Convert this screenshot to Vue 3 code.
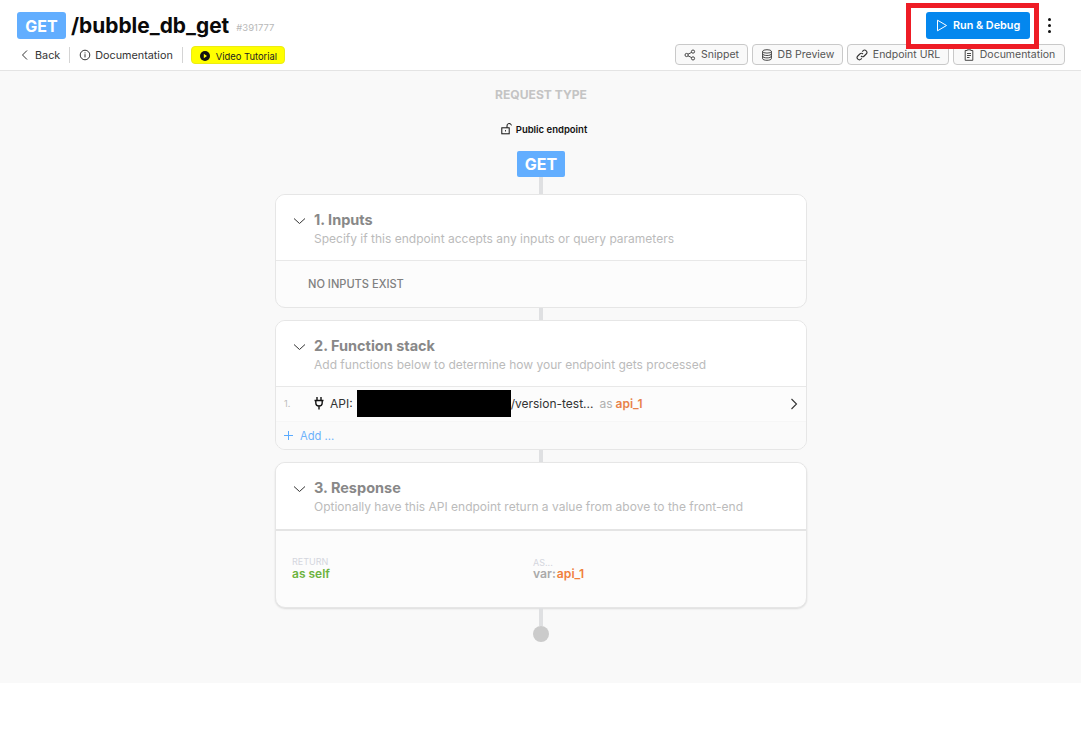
<template>
  <div class="page">
    <header class="top">
      <div class="top-left">
        <div class="title-row">
          <span class="verb verb-lg">GET</span>
          <h1 class="title">/bubble_db_get</h1>
          <span class="hash">#391777</span>
        </div>
        <div class="nav-row">
          <a class="nav-link back">
            <svg width="12" height="12" viewBox="0 0 12 12" fill="none" stroke="#333" stroke-width="1"><path d="M8 1.500 3.500 6 8 10.500" /></svg>
            Back
          </a>
          <span class="sep"></span>
          <a class="nav-link">
            <svg width="12" height="12" viewBox="0 0 12 12" fill="none" stroke="#333" stroke-width="1"><circle cx="6" cy="6" r="4.800" /><path d="M6 5.200v3.200M6 3.400v1" /></svg>
            Documentation
          </a>
          <span class="sep"></span>
          <a class="video">
            <svg width="10" height="10" viewBox="0 0 10 10"><circle cx="5" cy="5" r="5" fill="#111" /><path d="M3.800 2.800 7 5 3.800 7.200z" fill="#ff0" /></svg>
            Video Tutorial
          </a>
        </div>
      </div>
      <div class="top-right">
        <div class="action-row">
          <button class="run">
            <svg width="12" height="13" viewBox="0 0 12 13" fill="none" stroke="#fff" stroke-width="1"><path d="M1.500 1.200 10.500 6.500 1.500 11.800z" stroke-linejoin="round" /></svg>
            Run &amp; Debug
          </button>
          <span class="kebab"><i></i><i></i><i></i></span>
        </div>
        <div class="tool-row">
          <button class="tool t-snippet">
            <svg width="12" height="12" viewBox="0 0 12 12" fill="none" stroke="#333" stroke-width=".9"><circle cx="2.600" cy="6" r="1.600" /><circle cx="9" cy="2.600" r="1.600" /><circle cx="9" cy="9.400" r="1.600" /><path d="M4 5.200 7.600 3.400M4 6.800l3.600 1.800" /></svg>
            Snippet
          </button>
          <button class="tool t-db">
            <svg width="12" height="12" viewBox="0 0 12 12" fill="none" stroke="#333" stroke-width=".9"><ellipse cx="6" cy="2.400" rx="4.400" ry="1.700" /><path d="M1.600 2.400v7.200c0 1 2 1.700 4.400 1.700s4.400-.7 4.400-1.700V2.400M1.600 4.800c0 1 2 1.700 4.400 1.700s4.400-.7 4.400-1.700M1.600 7.200c0 1 2 1.700 4.400 1.700s4.400-.7 4.400-1.700" /></svg>
            DB Preview
          </button>
          <button class="tool t-url">
            <svg width="12" height="12" viewBox="0 0 12 12" fill="none" stroke="#333" stroke-width="1.100"><path d="M5 7a2.200 2.200 0 0 0 3.200 0l2-2a2.250 2.250 0 0 0-3.200-3.200l-.8.8" /><path d="M7 5a2.200 2.200 0 0 0-3.200 0l-2 2A2.250 2.250 0 0 0 5 10.200l.8-.8" /></svg>
            Endpoint URL
          </button>
          <button class="tool t-doc">
            <svg width="12" height="12" viewBox="0 0 12 12" fill="none" stroke="#333" stroke-width=".9"><path d="M2.200 1.500h2v-.7h3.600v.7h2v9.800H2.200z" /><path d="M4 4.500h4M4 6.500h4M4 8.500h2.500" /></svg>
            Documentation
          </button>
        </div>
      </div>
    </header>

    <main class="canvas">
      <div class="request-type">REQUEST TYPE</div>
      <div class="public">
        <svg width="12" height="12" viewBox="0 0 12 12" fill="none" stroke="#111" stroke-width="1"><rect x=".8" y="4.800" width="7.400" height="6" /><path d="M6 4.800V3a2 2 0 0 1 4.400-.6" /><path d="M4.500 7.200v1.200" /></svg>
        Public endpoint
      </div>
      <span class="verb verb-md">GET</span>
      <span class="line line-a"></span>

      <section class="card">
        <div class="card-head">
          <svg class="chev" width="13" height="8" viewBox="0 0 13 8" fill="none" stroke="#333" stroke-width="1"><path d="M1 1.500 6.500 6.500 12 1.500" /></svg>
          <div>
            <h2 class="card-title">1. Inputs</h2>
            <p class="card-sub">Specify if this endpoint accepts any inputs or query parameters</p>
          </div>
        </div>
        <div class="empty">NO INPUTS EXIST</div>
      </section>
      <span class="line line-b"></span>

      <section class="card">
        <div class="card-head">
          <svg class="chev" width="13" height="8" viewBox="0 0 13 8" fill="none" stroke="#333" stroke-width="1"><path d="M1 1.500 6.500 6.500 12 1.500" /></svg>
          <div>
            <h2 class="card-title">2. Function stack</h2>
            <p class="card-sub">Add functions below to determine how your endpoint gets processed</p>
          </div>
        </div>
        <div class="fn-row">
          <span class="fn-num">1.</span>
          <svg class="plug" width="12" height="14" viewBox="0 0 12 14" fill="none" stroke="#111" stroke-width="1.400"><path d="M4 1v3.500M8 1v3.500M1.500 4.500h9M2.800 4.500v2.300a3.200 3.200 0 0 0 6.400 0V4.500M6 10v3.500" /></svg>
          <span class="fn-text">API:</span>
          <span class="redact"></span>
          <span class="fn-text">/version-test...</span>
          <span class="fn-as">as</span>
          <span class="fn-var">api_1</span>
          <svg class="fn-go" width="8" height="12" viewBox="0 0 8 12" fill="none" stroke="#333" stroke-width="1.100"><path d="M1.500 1 6.500 6 1.500 11" /></svg>
        </div>
        <div class="add-row">
          <svg width="11" height="11" viewBox="0 0 11 11" stroke="#5aabff" stroke-width="1"><path d="M5.500 1v9M1 5.500h9" /></svg>
          <span>Add ...</span>
        </div>
      </section>
      <span class="line line-b"></span>

      <section class="card card-last">
        <div class="card-head head-last">
          <svg class="chev" width="13" height="8" viewBox="0 0 13 8" fill="none" stroke="#333" stroke-width="1"><path d="M1 1.500 6.500 6.500 12 1.500" /></svg>
          <div>
            <h2 class="card-title">3. Response</h2>
            <p class="card-sub">Optionally have this API endpoint return a value from above to the front-end</p>
          </div>
        </div>
        <div class="resp">
          <div class="resp-col">
            <div class="resp-label">RETURN</div>
            <div class="resp-green">as self</div>
          </div>
          <div class="resp-col resp-col-b">
            <div class="resp-label">AS...</div>
            <div class="resp-val"><span class="resp-grey">var:</span><span class="resp-orange">api_1</span></div>
          </div>
        </div>
      </section>
      <span class="line line-c"></span>
      <span class="end-dot"></span>
    </main>

    <div class="highlight"></div>
  </div>
</template>

<script setup>
</script>

<style>
html, body { margin: 0; background: #fff; }
</style>

<style scoped>
.page {
  position: relative;
  width: 1081px;
  height: 750px;
  overflow: hidden;
  background: #fff;
  font-family: Inter, "Liberation Sans", sans-serif;
  color: #111;
}
.top {
  display: flex;
  justify-content: space-between;
  box-sizing: border-box;
  border-bottom: 1px solid #e4e4e4;
  height: 71px;
  padding: 12px 16px 0 17px;
}
.title-row { display: flex; align-items: center; height: 27px; }
.verb {
  display: flex;
  align-items: center;
  justify-content: center;
  background: #62aeff;
  color: #fff;
  font-weight: 700;
  box-sizing: border-box;
}
.verb-lg { width: 49px; height: 27px; border-radius: 3px; font-size: 16px; }
.verb-md { width: 48px; height: 26px; border-radius: 2px; font-size: 16px; flex: none; }
.title { margin: 0 0 0 5px; font-size: 20.9px; line-height: 27px; font-weight: 700; color: #0a0a0a; }
.hash { margin: 3px 0 0 7px; font-size: 9.5px; color: #b9b9b9; }
.nav-row { display: flex; align-items: center; margin-top: 6px; height: 19px; }
.nav-link { display: flex; align-items: center; gap: 4px; padding-top: 1px; font-size: 10.8px; color: #333; }
.back { margin-left: 2px; }
.sep { width: 1px; height: 16px; background: #d4d4d4; margin: 0 9px 0 9px; }
.sep + .video { margin-left: -1px; }
.video {
  display: flex;
  align-items: center;
  gap: 6px;
  box-sizing: border-box;
  width: 94px;
  height: 18px;
  padding: 3px 0 0 8px;
  background: #ff0;
  border: 1px solid #ecec14;
  border-radius: 4px;
  font-size: 9.4px;
  color: #222;
}
.top-right { display: flex; flex-direction: column; align-items: flex-end; }
.action-row { display: flex; align-items: center; height: 27px; padding-right: 14px; }
.run {
  display: flex;
  align-items: center;
  gap: 5px;
  width: 104px;
  height: 27px;
  padding: 0 0 0 10px;
  border: 0;
  border-radius: 3px;
  background: #0487ee;
  color: #fff;
  font: 600 10.8px Inter, "Liberation Sans", sans-serif;
}
.kebab { display: flex; flex-direction: column; gap: 3px; margin-left: 18px; width: 3px; }
.kebab i { display: block; width: 3px; height: 3px; border-radius: 50%; background: #111; }
.tool-row { display: flex; gap: 4px; margin-top: 5px; }
.tool {
  display: flex;
  align-items: center;
  justify-content: center;
  gap: 5px;
  height: 21px;
  padding: 0;
  box-sizing: border-box;
  background: #f9f9f9;
  border: 1px solid #c9c9c9;
  border-radius: 4px;
  font: 400 10.5px Inter, "Liberation Sans", sans-serif;
  color: #555;
}
.t-snippet { width: 73px; }
.t-db { width: 91px; }
.t-url { width: 102px; }
.t-doc { width: 112px; }
.canvas {
  display: flex;
  flex-direction: column;
  align-items: center;
  height: 612px;
  box-sizing: border-box;
  padding: 17px 0 0 1px;
  background: #f9f9f9;
}
.request-type { font-size: 12.1px; line-height: 14px; font-weight: 700; color: #c4c4c4; }
.public {
  display: flex;
  align-items: center;
  gap: 3px;
  margin: 20px 0 0 6px;
  height: 14px;
  font-size: 9.5px;
  font-weight: 600;
  color: #111;
}
.public + .verb { margin-top: 15px; }
.line { display: block; width: 4px; background: #dfe0e2; flex: none; }
.line-a { height: 17px; }
.line-b { height: 12px; }
.line-c { height: 18px; }
.card {
  width: 532px;
  box-sizing: border-box;
  background: #fcfcfc;
  border: 1px solid #e6e6e6;
  border-radius: 10px;
  overflow: hidden;
  flex: none;
}
.card-last { box-shadow: 0 1px 2px rgba(0, 0, 0, 0.12); }
.card-head {
  display: flex;
  box-sizing: border-box;
  height: 66px;
  padding: 16px 0 0 17px;
  background: #fff;
  border-bottom: 1px solid #e8e8e8;
}
.head-last { height: 68px; border-bottom: 2px solid #e4e4e4; }
.chev { margin: 6px 8px 0 0; flex: none; }
.card-title { margin: 0; font-size: 14.5px; line-height: 18px; font-weight: 700; color: #888; }
.card-sub { margin: 2px 0 0; font-size: 12px; line-height: 16px; color: #bbb; }
.empty { height: 46px; padding: 16px 0 0 32px; box-sizing: border-box; font-size: 11.1px; font-weight: 500; line-height: 15px; color: #808080; }
.fn-row {
  position: relative;
  display: flex;
  align-items: center;
  height: 35px;
  padding: 0 0 2px 8px;
  background: #fcfcfc;
  border-bottom: 1px solid #f6f6f6;
  box-sizing: border-box;
  font-size: 12px;
}
.fn-num { width: 29px; font-size: 9px; color: #bbb; flex: none; }
.plug { margin-right: 5px; flex: none; }
.fn-text { color: #333; }
.redact { width: 154px; height: 27px; margin: 0 0 0 4px; background: #000; flex: none; }
.fn-as { margin-left: 6px; color: #b0b0b0; }
.fn-var { margin-left: 3px; font-weight: 600; color: #e8824a; }
.fn-go { position: absolute; right: 8px; top: 11px; }
.add-row { display: flex; align-items: center; gap: 6px; height: 27px; padding-left: 7px; background: #fafafa; box-sizing: border-box; font-size: 11.2px; color: #6eb2fa; }
.resp { display: flex; height: 76px; padding: 25px 0 0 16px; box-sizing: border-box; }
.resp-col { width: 241px; }
.resp-label { font-size: 9px; line-height: 11px; color: #d4d6de; }
.resp-col-b .resp-label { padding-top: 1px; }
.resp-green { font-size: 12px; line-height: 14px; font-weight: 600; color: #6cb33f; }
.resp-val { margin-top: -1px; font-size: 12.2px; line-height: 13px; font-weight: 600; display: flex; gap: 1px; }
.resp-grey { color: #aaa; }
.resp-orange { color: #f0803c; }
.end-dot { width: 16px; height: 16px; border-radius: 50%; background: #cbcbcb; flex: none; }
.highlight {
  position: absolute;
  left: 906px;
  top: 3px;
  width: 133px;
  height: 46px;
  box-sizing: border-box;
  border: 5px solid #ee1c25;
  pointer-events: none;
}
</style>
